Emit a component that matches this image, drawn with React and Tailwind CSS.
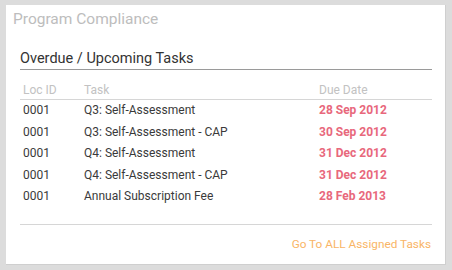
export default function App() {
  const rows = [
    { loc: "0001", task: "Q3: Self-Assessment", due: "28 Sep 2012" },
    { loc: "0001", task: "Q3: Self-Assessment - CAP", due: "30 Sep 2012" },
    { loc: "0001", task: "Q4: Self-Assessment", due: "31 Dec 2012" },
    { loc: "0001", task: "Q4: Self-Assessment - CAP", due: "31 Dec 2012" },
    { loc: "0001", task: "Annual Subscription Fee", due: "28 Feb 2013" },
  ];
  return (
    <div
      className="w-[452px] h-[270px] bg-[#dcdcdc] pt-[5px] pl-[6px]"
      style={{ fontFamily: "Roboto, 'Liberation Sans', sans-serif" }}
    >
      <div className="w-[440px] h-[260px] bg-white flex flex-col border-r border-b border-[#cfcfcf]">
        <div className="ml-[7px] mt-[4px] h-[20px] leading-[20px] text-[15.5px] text-[#bdbdbd]">
          Program Compliance
        </div>
        <div className="pl-[14px] pr-[13px] flex flex-col">
          <div className="mt-[21px] h-[18px] leading-[18px] text-[14.5px] text-[#333]">
            Overdue / Upcoming Tasks
          </div>
          <div className="h-px bg-[#9a9a9a] mt-[1px]" />
          <div className="grid grid-cols-[61px_235px_1fr] pl-[3px] mt-[11px] h-[18px] leading-[18px] text-[12px] text-[#c2c2c2]">
            <span>Loc ID</span>
            <span>Task</span>
            <span>Due Date</span>
          </div>
          <div className="h-px bg-[#d6d6d6]" />
          <div className="flex flex-col">
            {rows.map((r, i) => (
              <div
                key={i}
                className="grid grid-cols-[61px_235px_1fr] pl-[3px] h-[21.5px] leading-[21.5px] text-[12px] text-[#3a3a3a]"
              >
                <span>{r.loc}</span>
                <span>{r.task}</span>
                <span className="font-bold text-[#e8687c]">{r.due}</span>
              </div>
            ))}
          </div>
          <div className="h-px bg-[#d6d6d6] mt-[16px]" />
          <div className="flex justify-end mt-[11px] h-[16px] leading-[16px] text-[11.8px] text-[#f9b566] pr-[1px]">
            Go To ALL Assigned Tasks
          </div>
        </div>
      </div>
    </div>
  );
}
